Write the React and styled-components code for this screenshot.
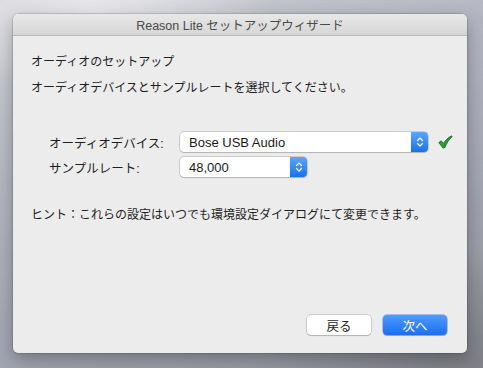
import React from 'react';
import styled, { createGlobalStyle } from 'styled-components';

const GlobalStyle = createGlobalStyle`
    html, body {
        margin: 0;
        padding: 0;
    }
    body {
        width: 483px;
        height: 368px;
        overflow: hidden;
        font-family: "Liberation Sans", "Noto Sans CJK JP", sans-serif;
        background:
            radial-gradient(ellipse 260px 120px at 90px 10px, rgba(235,235,238,0.9), rgba(235,235,238,0) 70%),
            radial-gradient(ellipse 300px 160px at 470px 360px, rgba(120,122,128,0.7), rgba(120,122,128,0) 70%),
            linear-gradient(160deg, #d2d3d7 0%, #b4b7c2 35%, #a3a6b3 65%, #8f9198 100%);
    }
`;

const Desktop = styled.div`
    padding: 14px 16px 15px 13px;
`;

const Window = styled.div`
    width: 454px;
    height: 339px;
    display: flex;
    flex-direction: column;
    border-radius: 5px;
    overflow: hidden;
    background: #ececec;
    box-shadow: 0 0 0 0.5px rgba(0,0,0,0.25), 0 6px 18px rgba(0,0,0,0.3);
`;

const TitleBar = styled.div`
    height: 21px;
    flex-shrink: 0;
    display: flex;
    align-items: center;
    justify-content: center;
    background: linear-gradient(#e8e8e8, #d6d6d6);
    border-bottom: 1px solid #b9b9b9;
    font-size: 12.5px;
    color: #4a4a4a;
`;

const Body = styled.div`
    flex: 1;
    display: flex;
    flex-direction: column;
    padding: 17px 20px 18px 18px;
    color: #1e1e1e;
    font-size: 12px;
`;

const Line = styled.div`
    line-height: 18px;
    margin-bottom: ${p => p.gap || 0}px;
`;

const Form = styled.div`
    display: grid;
    grid-template-columns: 131px auto;
    row-gap: 5px;
    align-items: center;
    margin: 35px 0 0 18px;
`;

const Label = styled.div`
    font-size: 12.5px;
`;

const Field = styled.div`
    display: flex;
    align-items: center;
    gap: 10px;
`;

const Popup = styled.div`
    width: ${p => p.width}px;
    height: 20px;
    display: flex;
    align-items: stretch;
    background: #fff;
    border-radius: 4px;
    box-shadow: 0 0 0 0.5px rgba(0,0,0,0.28), 0 1px 1px rgba(0,0,0,0.12);
    overflow: hidden;
`;

const PopupValue = styled.div`
    flex: 1;
    display: flex;
    align-items: center;
    padding-left: 9px;
    font-size: 13px;
    color: #1a1a1a;
`;

const Stepper = styled.div`
    width: 17px;
    display: flex;
    align-items: center;
    justify-content: center;
    background: linear-gradient(#5aa6fd, #1672f3);
`;

const Hint = styled.div`
    margin-top: 29px;
    line-height: 18px;
`;

const Footer = styled.div`
    margin-top: auto;
    display: flex;
    justify-content: flex-end;
    gap: 12px;
`;

const Button = styled.div`
    width: 64px;
    height: 20px;
    display: flex;
    align-items: center;
    justify-content: center;
    border-radius: 4px;
    font-size: 12.5px;
    color: ${p => p.primary ? '#fff' : '#1e1e1e'};
    background: ${p => p.primary ? 'linear-gradient(#4d9cfd, #1a6ff4)' : '#fff'};
    box-shadow: ${p => p.primary
        ? '0 0 0 0.5px rgba(20,80,200,0.6), 0 1px 1px rgba(0,0,0,0.15)'
        : '0 0 0 0.5px rgba(0,0,0,0.28), 0 1px 1px rgba(0,0,0,0.12)'};
`;

const Chevrons = () => (
    <svg width="8" height="12" viewBox="0 0 8 12">
        <path d="M1.5 4.5 L4 2 L6.5 4.5 M1.5 7.5 L4 10 L6.5 7.5" fill="none" stroke="#fff" strokeWidth="1.3" strokeLinecap="round" strokeLinejoin="round" />
    </svg>
);

const Check = () => (
    <svg width="15" height="14" viewBox="0 0 15 14">
        <path d="M0.8 7.6 L3.2 5.8 L5.6 8.4 C7.6 5 10 2.6 13.6 0.8 L14.2 1.8 C11.2 4.2 8.8 7.6 6.8 12.8 L5 13 Z" fill="#2c9a33" stroke="#17661d" strokeWidth="0.8" strokeLinejoin="round" />
    </svg>
);

export default function App() {
    return (
        <>
            <GlobalStyle />
            <Desktop>
                <Window>
                    <TitleBar>Reason Lite セットアップウィザード</TitleBar>
                    <Body>
                        <Line gap={8}>オーディオのセットアップ</Line>
                        <Line>オーディオデバイスとサンプルレートを選択してください。</Line>
                        <Form>
                            <Label>オーディオデバイス:</Label>
                            <Field>
                                <Popup width={248}>
                                    <PopupValue>Bose USB Audio</PopupValue>
                                    <Stepper><Chevrons /></Stepper>
                                </Popup>
                                <Check />
                            </Field>
                            <Label>サンプルレート:</Label>
                            <Field>
                                <Popup width={127}>
                                    <PopupValue>48,000</PopupValue>
                                    <Stepper><Chevrons /></Stepper>
                                </Popup>
                            </Field>
                        </Form>
                        <Hint>ヒント：これらの設定はいつでも環境設定ダイアログにて変更できます。</Hint>
                        <Footer>
                            <Button>戻る</Button>
                            <Button primary>次へ</Button>
                        </Footer>
                    </Body>
                </Window>
            </Desktop>
        </>
    );
}
